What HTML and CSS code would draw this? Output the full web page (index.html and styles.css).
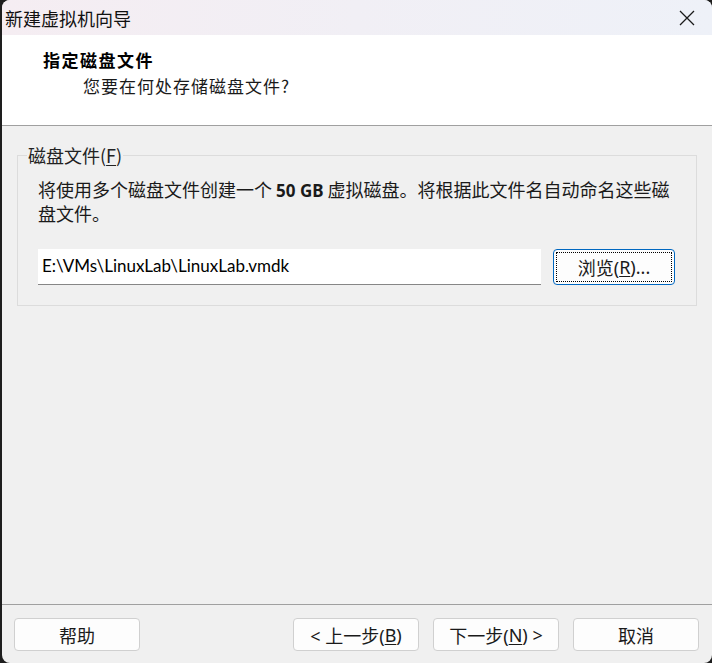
FILE: index.html
```html
<!DOCTYPE html>
<html lang="zh-CN">
<head>
<meta charset="utf-8">
<title>新建虚拟机向导</title>
<link rel="stylesheet" href="styles.css">
</head>
<body>
<div class="window">
  <div class="titlebar">
    <span class="title">新建虚拟机向导</span>
    <svg class="close" width="16" height="16" viewBox="0 0 16 16"><path d="M1 1L15 15M15 1L1 15" stroke="#1a1a1a" stroke-width="1.3" fill="none"/></svg>
  </div>
  <div class="header">
    <div class="h-title">指定磁盘文件</div>
    <div class="h-sub">您要在何处存储磁盘文件?</div>
  </div>
  <div class="content">
    <fieldset class="group">
      <legend class="legend">磁盘文件(<u>F</u>)</legend>
      <p class="desc">将使用多个磁盘文件创建一个 <b>50 GB</b> 虚拟磁盘。将根据此文件名自动命名这些磁<br>盘文件。</p>
      <div class="row">
        <div class="input">E:\VMs\LinuxLab\LinuxLab.vmdk</div>
        <div class="btn browse"><span class="focus">浏览(<u>R</u>)...</span></div>
      </div>
    </fieldset>
  </div>
  <div class="footer">
    <div class="btn fbtn">帮助</div>
    <div class="spacer"></div>
    <div class="btn fbtn">&lt; 上一步(<u>B</u>)</div>
    <div class="btn fbtn">下一步(<u>N</u>) &gt;</div>
    <div class="btn fbtn">取消</div>
  </div>
</div>
</body>
</html>
```

FILE: styles.css
```css
html, body {
  margin: 0;
  padding: 0;
  background: #1e1e1e;
  overflow: hidden;
}
body {
  font-family: "Noto Sans", "Noto Sans CJK SC", sans-serif;
  font-size: 18px;
  color: #1a1a1a;
}
.window {
  margin-left: 2px;
  width: 710px;
  height: 663px;
  border-radius: 8px;
  overflow: hidden;
  background: #f0f0f0;
  display: flex;
  flex-direction: column;
}
.titlebar {
  height: 35px;
  flex: none;
  display: flex;
  align-items: center;
  padding-left: 3px;
  background: linear-gradient(90deg, #f5edf2 0%, #f1eff5 50%, #eef1f8 100%);
  box-sizing: border-box;
}
.title {
  font-family: "Noto Sans CJK SC", sans-serif;
  font-size: 18px;
  line-height: 24px;
  color: #111;
  flex: 1;
}
.close {
  margin-right: 17px;
}
.header {
  height: 91px;
  flex: none;
  background: #ffffff;
  border-bottom: 1px solid #a0a0a0;
  box-sizing: border-box;
  padding-top: 12px;
}
.h-title {
  font-family: "Noto Sans CJK SC", sans-serif;
  font-weight: 700;
  font-size: 17px;
  letter-spacing: 1.5px;
  line-height: 26px;
  padding-left: 41px;
  color: #000;
}
.h-sub {
  font-family: "Noto Sans CJK SC", sans-serif;
  font-size: 17px;
  letter-spacing: 1px;
  line-height: 26px;
  padding-left: 81px;
  color: #1a1a1a;
}
.content {
  flex: 1;
  padding: 18px 15px 0 15px;
}
.group {
  margin: 0;
  border: 1px solid #dcdcdc;
  padding: 0 19px 20px 20px;
  min-width: 0;
}
.legend {
  font-family: "Noto Sans CJK SC", sans-serif;
  font-size: 18px;
  line-height: 22px;
  padding: 0 1px;
  margin-left: -11px;
  color: #222;
}
.desc {
  margin: 12px 0 0 0;
  font-family: "Noto Sans CJK SC", sans-serif;
  font-size: 18px;
  line-height: 22px;
  color: #1a1a1a;
}
.desc b {
  font-family: "Noto Sans", sans-serif;
  font-weight: 700;
  font-size: 17px;
}
.row {
  display: flex;
  align-items: center;
  margin-top: 25px;
  gap: 12px;
}
.input {
  width: 503px;
  height: 36px;
  box-sizing: border-box;
  background: #ffffff;
  border-bottom: 1px solid #868686;
  font-family: "Lato", sans-serif;
  font-size: 17px;
  line-height: 34px;
  padding-left: 4px;
  color: #000;
}
.btn {
  background: #fdfdfd;
  border: 1px solid #d0d0d0;
  border-radius: 4px;
  box-sizing: border-box;
  display: flex;
  align-items: center;
  justify-content: center;
  font-family: "Noto Sans", "Noto Sans CJK SC", sans-serif;
  font-size: 18px;
  color: #1a1a1a;
}
.browse {
  width: 122px;
  height: 36px;
  border-color: #0067c0;
  padding: 2px;
}
.focus {
  flex: 1;
  align-self: stretch;
  display: flex;
  align-items: center;
  justify-content: center;
  border: 1px dotted #000;
}
.footer {
  height: 59px;
  flex: none;
  border-top: 1px solid #a0a0a0;
  box-sizing: border-box;
  display: flex;
  padding: 13px 13px 0 12px;
  gap: 14px;
}
.spacer {
  flex: 1;
}
.fbtn {
  width: 126px;
  height: 33px;
}
u {
  text-decoration-thickness: 1px;
  text-underline-offset: 2px;
}
```
